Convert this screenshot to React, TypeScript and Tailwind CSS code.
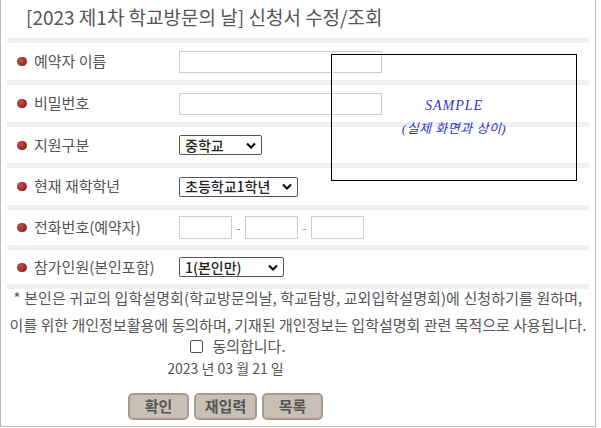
import React from 'react';

const font = { fontFamily: '"Noto Sans CJK KR", "Noto Sans", sans-serif' };

function Bullet() {
  return (
    <span className="inline-block w-[10px] h-[9px] rounded-full bg-[radial-gradient(circle_at_35%_35%,#c0504d,#7a1414)] mr-[7px]" />
  );
}

function Band() {
  return <div className="h-[5px] mx-[6px] bg-[#f0f0f0]" />;
}

function Row({ label, h, children }: { label: string; h: string; children?: React.ReactNode }) {
  return (
    <div className={`flex items-center ${h}`}>
      <div className="w-[178px] pl-[16px] flex items-center text-[15px] text-[#555]">
        <Bullet />
        <span>{label}</span>
      </div>
      <div className="flex items-center">{children}</div>
    </div>
  );
}

function Select({ w, value }: { w: string; value: string }) {
  return (
    <div className={`${w} h-[20px] border border-[#555] rounded-[2px] flex items-center justify-between pl-[5px] pr-[5px] text-[14px] font-medium text-[#222] bg-white`}>
      <span>{value}</span>
      <svg width="10" height="7" viewBox="0 0 10 7"><path d="M1 1.5 L5 5.5 L9 1.5" stroke="#111" strokeWidth="2.2" fill="none" /></svg>
    </div>
  );
}

export default function App() {
  return (
    <div className="w-[601px] h-[428px] bg-white" style={font}>
      <div className="relative w-[596px] h-[427px] border-l border-r border-b border-[#bbb]">
        <div className="h-[38px] pl-[25px] pb-[3px] flex items-center text-[19px] text-[#555]">
          [2023 제1차 학교방문의 날] 신청서 수정/조회
        </div>
        <Band />
        <Row label="예약자 이름" h="h-[37px]">
          <div className="w-[203px] h-[22px] border border-[#ccc]" />
        </Row>
        <Band />
        <Row label="비밀번호" h="h-[37px]">
          <div className="w-[203px] h-[22px] border border-[#ccc]" />
        </Row>
        <Band />
        <Row label="지원구분" h="h-[36px]">
          <Select w="w-[83px]" value="중학교" />
        </Row>
        <Band />
        <Row label="현재 재학학년" h="h-[37px]">
          <Select w="w-[119px]" value="초등학교1학년" />
        </Row>
        <Band />
        <Row label="전화번호(예약자)" h="h-[35px]">
          <div className="w-[53px] h-[23px] border border-[#ccc]" />
          <span className="w-[13px] text-center text-[#888] text-[12px]">-</span>
          <div className="w-[53px] h-[23px] border border-[#ccc]" />
          <span className="w-[13px] text-center text-[#888] text-[12px]">-</span>
          <div className="w-[53px] h-[23px] border border-[#ccc]" />
        </Row>
        <Band />
        <Row label="참가인원(본인포함)" h="h-[34px]">
          <Select w="w-[105px]" value="1(본인만)" />
        </Row>
        <Band />
        <div className="text-center text-[15px] text-[#555] leading-[20px]">
          <div className="mt-[-1px] tracking-[0.1px]">* 본인은 귀교의 입학설명회(학교방문의날, 학교탐방, 교외입학설명회)에 신청하기를 원하며,</div>
          <div className="mt-[7px]">이를 위한 개인정보활용에 동의하며, 기재된 개인정보는 입학설명회 관련 목적으로 사용됩니다.</div>
        </div>
        <div className="flex items-center justify-center gap-[9px] text-[15px] text-[#555] h-[20px] mt-[1px] pr-[120px]">
          <span className="w-[13px] h-[13px] border border-[#555] rounded-[2px]" />
          <span>동의합니다.</span>
        </div>
        <div className="text-center text-[14px] text-[#555] h-[20px] leading-[20px] mt-[2px] pr-[145px]">
          2023 년 03 월 21 일
        </div>
        <div className="flex justify-center gap-[5px] mt-[15px] pr-[145px]">
          {['확인', '재입력', '목록'].map((t, i) => (
            <button
              key={t}
              className={`${i === 1 ? 'w-[63px]' : 'w-[61px]'} h-[27px] rounded-[5px] border-2 border-[#a69b8e] bg-[#c9c0b5] text-[15px] font-bold text-[#555]`}
            >
              {t}
            </button>
          ))}
        </div>
        <div className="absolute left-[330px] top-[54px] w-[246px] h-[127px] border border-black flex flex-col items-center justify-center text-[#2a37c8] italic text-[13px]" style={{ fontFamily: '"Liberation Serif", "Noto Sans CJK KR", serif' }}>
          <div className="mt-[-2px] text-[14px] tracking-[1px]">SAMPLE</div>
          <div className="mt-[3px] tracking-[0.5px]">(실제 화면과 상이)</div>
        </div>
      </div>
    </div>
  );
}
